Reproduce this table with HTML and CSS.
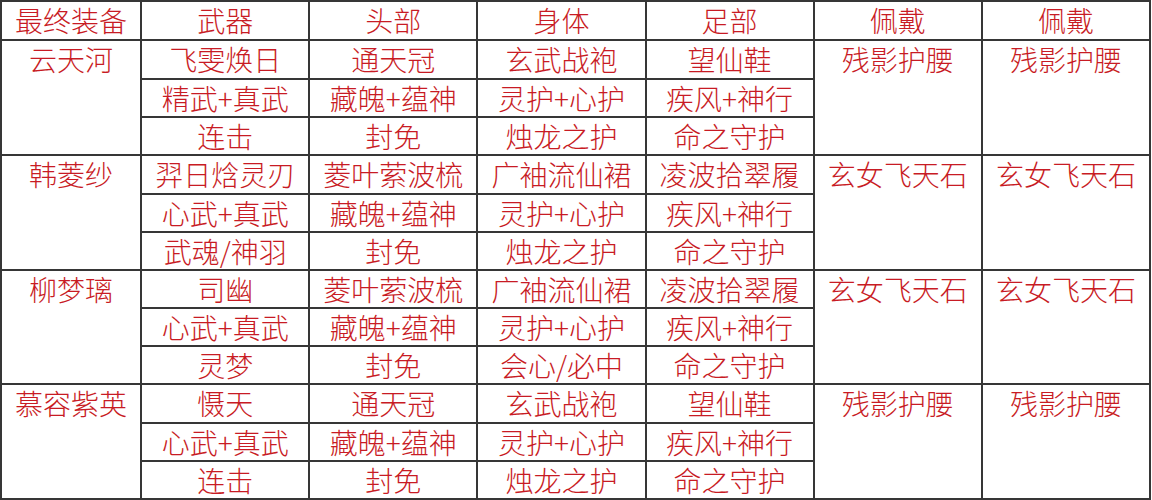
FILE: index.html
```html
<!DOCTYPE html>
<html lang="zh">
<head>
<meta charset="utf-8">
<link rel="stylesheet" href="styles.css">
</head>
<body>
<table class="gear">
  <colgroup>
    <col class="c-name"><col class="c"><col class="c"><col class="c"><col class="c"><col class="c"><col class="c">
  </colgroup>
  <thead>
    <tr><th>最终装备</th><th>武器</th><th>头部</th><th>身体</th><th>足部</th><th>佩戴</th><th>佩戴</th></tr>
  </thead>
  <tbody>
    <tr class="first"><td rowspan="3">云天河</td><td>飞雯焕日</td><td>通天冠</td><td>玄武战袍</td><td>望仙鞋</td><td rowspan="3">残影护腰</td><td rowspan="3">残影护腰</td></tr>
    <tr><td>精武+真武</td><td>藏魄+蕴神</td><td>灵护+心护</td><td>疾风+神行</td></tr>
    <tr><td>连击</td><td>封免</td><td>烛龙之护</td><td>命之守护</td></tr>

    <tr class="first"><td rowspan="3">韩菱纱</td><td>羿日焓灵刃</td><td>菱叶萦波梳</td><td>广袖流仙裙</td><td>凌波拾翠履</td><td rowspan="3">玄女飞天石</td><td rowspan="3">玄女飞天石</td></tr>
    <tr><td>心武+真武</td><td>藏魄+蕴神</td><td>灵护+心护</td><td>疾风+神行</td></tr>
    <tr><td>武魂/神羽</td><td>封免</td><td>烛龙之护</td><td>命之守护</td></tr>

    <tr class="first"><td rowspan="3">柳梦璃</td><td>司幽</td><td>菱叶萦波梳</td><td>广袖流仙裙</td><td>凌波拾翠履</td><td rowspan="3">玄女飞天石</td><td rowspan="3">玄女飞天石</td></tr>
    <tr><td>心武+真武</td><td>藏魄+蕴神</td><td>灵护+心护</td><td>疾风+神行</td></tr>
    <tr><td>灵梦</td><td>封免</td><td>会心/必中</td><td>命之守护</td></tr>

    <tr class="first"><td rowspan="3">慕容紫英</td><td>慑天</td><td>通天冠</td><td>玄武战袍</td><td>望仙鞋</td><td rowspan="3">残影护腰</td><td rowspan="3">残影护腰</td></tr>
    <tr><td>心武+真武</td><td>藏魄+蕴神</td><td>灵护+心护</td><td>疾风+神行</td></tr>
    <tr><td>连击</td><td>封免</td><td>烛龙之护</td><td>命之守护</td></tr>
  </tbody>
</table>
</body>
</html>
```

FILE: styles.css
```css
html, body {
  margin: 0;
  padding: 0;
  background: #ffffff;
}

.gear {
  border-collapse: collapse;
  table-layout: fixed;
  width: 1151px;
  margin: 0;
  font-family: "Noto Sans CJK SC", "Noto Sans CJK JP", sans-serif;
  font-weight: 300;
  font-size: 28px;
  line-height: 30px;
  color: #c81b24;
}

.c-name { width: 140px; }
.c { width: 168px; }

.gear th,
.gear td {
  border: 2px solid #363636;
  padding: 3px 0 0;
  height: 33px;
  line-height: 30px;
  text-align: center;
  vertical-align: top;
  white-space: nowrap;
  font-weight: 300;
  box-sizing: content-box;
}

.gear th {
  height: 34px;
}

.gear .first td {
  height: 33.75px;
}
```
